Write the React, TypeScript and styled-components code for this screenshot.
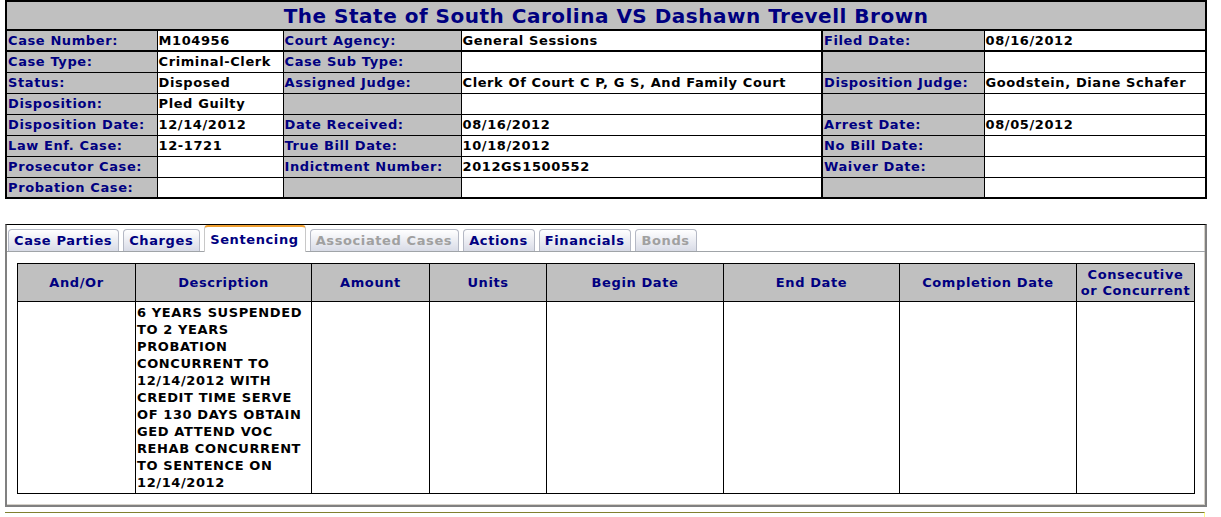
import styled, { createGlobalStyle } from "styled-components";

const GlobalStyle = createGlobalStyle`
  body {
    margin: 0;
    background: #fff;
    font-family: "DejaVu Sans", Verdana, sans-serif;
    letter-spacing: 0.6px;
  }
`;

const Page = styled.div`
  padding: 0 14px 0 5px;
`;

const CaseTable = styled.table`
  width: 1200px;
  border-collapse: collapse;
  border: 2px solid #000;
  table-layout: fixed;
`;

const TitleCell = styled.th`
  background: #c0c0c0;
  color: #000080;
  font-size: 20px;
  font-weight: bold;
  letter-spacing: 0.5px;
  height: 27px;
  padding: 0;
  border-bottom: 2px solid #000;
  text-align: center;
`;

const Row = styled.tr<{ $thick?: boolean }>`
  height: 21px;
  & > td {
    border-bottom: ${(p) => (p.$thick ? "2px" : "1px")} solid #000;
  }
`;

const Label = styled.td<{ $wide?: boolean }>`
  background: #c0c0c0;
  color: #000080;
  font-size: 13px;
  font-weight: bold;
  padding: 0 1px;
  border-left: ${(p) => (p.$wide ? "2px" : "1px")} solid #000;
  border-right: 1px solid #000;
  white-space: nowrap;
  overflow: hidden;
`;

const Value = styled.td`
  background: #fff;
  color: #000;
  font-size: 13px;
  font-weight: bold;
  padding: 0 1px;
  border-right: 1px solid #000;
  white-space: nowrap;
  overflow: hidden;
`;

const TabPanel = styled.div`
  margin-top: 25px;
  width: 1198px;
  border-top: 1px solid #000;
  border-left: 2px solid #808080;
  border-right: 2px solid #808080;
  border-bottom: 2px solid #808080;
  box-shadow: inset -1px -1px 0 #d4d0c8;
  padding-bottom: 11px;
`;

const TabStrip = styled.div`
  display: flex;
  align-items: flex-end;
  gap: 4px;
  height: 26px;
  padding-left: 1px;
  border-bottom: 1px solid #a0a4a8;
`;

const Tab = styled.div<{ $active?: boolean; $disabled?: boolean }>`
  height: ${(p) => (p.$active ? "24px" : "21px")};
  padding: 0 6px 0 5px;
  display: flex;
  align-items: center;
  font-size: 13px;
  font-weight: bold;
  color: ${(p) => (p.$disabled ? "#a0a0a0" : "#000080")};
  background: ${(p) =>
    p.$active ? "#fff" : "linear-gradient(#ffffff, #e4e6ee 70%, #d8dbe6)"};
  border: 1px solid ${(p) => (p.$active ? "#c8c8c8" : "#b4b8c4")};
  border-top: ${(p) => (p.$active ? "2px solid #f0a030" : "1px solid #b4b8c4")};
  border-bottom: none;
  border-radius: 4px 4px 0 0;
  margin-bottom: ${(p) => (p.$active ? "-1px" : "0")};
  padding-bottom: ${(p) => (p.$active ? "1px" : "0")};
`;

const Content = styled.div`
  padding: 11px 12px 0 10px;
`;

const SentenceTable = styled.table`
  width: 1177px;
  border-collapse: collapse;
  table-layout: fixed;
  border: 1px solid #000;
`;

const HeadCell = styled.th`
  background: #c0c0c0;
  color: #000080;
  font-size: 13px;
  font-weight: bold;
  height: 37px;
  padding: 0 1px;
  border: 1px solid #000;
  text-align: center;
  line-height: 16px;
`;

const BodyCell = styled.td`
  vertical-align: top;
  height: 189px;
  border: 1px solid #000;
  padding: 2px 1px 0;
  font-size: 13px;
  font-weight: bold;
  color: #000;
  line-height: 17px;
`;

const NextBox = styled.div`
  margin-top: 5px;
  width: 1199px;
  height: 10px;
  border-top: 1px solid #808030;
  border-right: 1px solid #ffff80;
`;

const rows: [string, string, string, string, string, string][] = [
  ["Case Number:", "M104956", "Court Agency:", "General Sessions", "Filed Date:", "08/16/2012"],
  ["Case Type:", "Criminal-Clerk", "Case Sub Type:", "", "", ""],
  ["Status:", "Disposed", "Assigned Judge:", "Clerk Of Court C P, G S, And Family Court", "Disposition Judge:", "Goodstein, Diane Schafer"],
  ["Disposition:", "Pled Guilty", "", "", "", ""],
  ["Disposition Date:", "12/14/2012", "Date Received:", "08/16/2012", "Arrest Date:", "08/05/2012"],
  ["Law Enf. Case:", "12-1721", "True Bill Date:", "10/18/2012", "No Bill Date:", ""],
  ["Prosecutor Case:", "", "Indictment Number:", "2012GS1500552", "Waiver Date:", ""],
  ["Probation Case:", "", "", "", "", ""],
];

const tabs = [
  { name: "Case Parties" },
  { name: "Charges" },
  { name: "Sentencing", active: true },
  { name: "Associated Cases", disabled: true },
  { name: "Actions" },
  { name: "Financials" },
  { name: "Bonds", disabled: true },
];

const columns = [
  { title: "And/Or", width: 118 },
  { title: "Description", width: 176 },
  { title: "Amount", width: 118 },
  { title: "Units", width: 117 },
  { title: "Begin Date", width: 177 },
  { title: "End Date", width: 176 },
  { title: "Completion Date", width: 177 },
  { title: "Consecutive or Concurrent", width: 118 },
];

const description =
  "6 YEARS SUSPENDED TO 2 YEARS PROBATION CONCURRENT TO 12/14/2012 WITH CREDIT TIME SERVE OF 130 DAYS OBTAIN GED ATTEND VOC REHAB CONCURRENT TO SENTENCE ON 12/14/2012";

export default function App() {
  return (
    <Page>
      <GlobalStyle />
      <CaseTable>
        <colgroup>
          <col style={{ width: 151 }} />
          <col style={{ width: 126 }} />
          <col style={{ width: 178 }} />
          <col style={{ width: 361 }} />
          <col style={{ width: 162 }} />
          <col style={{ width: 222 }} />
        </colgroup>
        <thead>
          <tr>
            <TitleCell colSpan={6}>The State of South Carolina VS Dashawn Trevell Brown</TitleCell>
          </tr>
        </thead>
        <tbody>
          {rows.map((r, i) => (
            <Row key={i} $thick={i === 0}>
              <Label>{r[0]}</Label>
              <Value>{r[1]}</Value>
              <Label>{r[2]}</Label>
              <Value>{r[3]}</Value>
              <Label $wide>{r[4]}</Label>
              <Value>{r[5]}</Value>
            </Row>
          ))}
        </tbody>
      </CaseTable>

      <TabPanel>
        <TabStrip>
          {tabs.map((t) => (
            <Tab key={t.name} $active={t.active} $disabled={t.disabled}>
              {t.name}
            </Tab>
          ))}
        </TabStrip>
        <Content>
          <SentenceTable>
            <colgroup>
              {columns.map((c) => (
                <col key={c.title} style={{ width: c.width }} />
              ))}
            </colgroup>
            <thead>
              <tr>
                {columns.map((c) => (
                  <HeadCell key={c.title}>{c.title}</HeadCell>
                ))}
              </tr>
            </thead>
            <tbody>
              <tr>
                <BodyCell />
                <BodyCell>{description}</BodyCell>
                <BodyCell />
                <BodyCell />
                <BodyCell />
                <BodyCell />
                <BodyCell />
                <BodyCell />
              </tr>
            </tbody>
          </SentenceTable>
        </Content>
      </TabPanel>
      <NextBox />
    </Page>
  );
}
